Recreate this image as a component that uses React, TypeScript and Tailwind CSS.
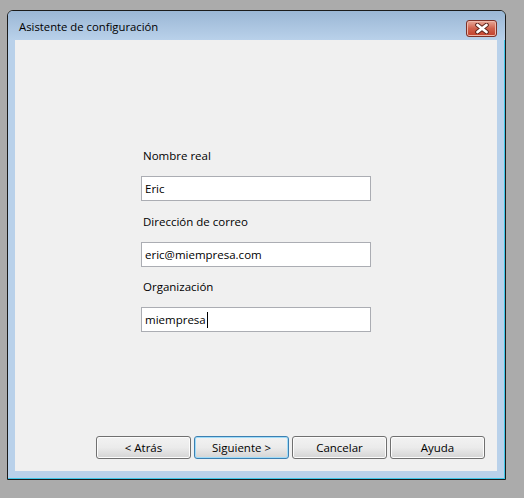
const font = "font-['Open_Sans','Noto_Sans',sans-serif]";

function Field({ label, value, caret, className }: { label: string; value: string; caret?: boolean; className?: string }) {
  return (
    <div className={`flex flex-col ${className ?? ""}`}>
      <div className="h-[16px] pl-[2px] text-[11.5px] leading-[16px] text-black">{label}</div>
      <div className="mt-[12px] flex h-[25px] w-[230px] items-center border border-[#abadb3] bg-white pl-[3px] text-[11.5px] text-black">
        <span>{value}</span>
        {caret && <span className="ml-px h-[16px] w-px bg-black" />}
      </div>
    </div>
  );
}

function WinButton({ children, focused }: { children: string; focused?: boolean }) {
  return (
    <button
      className={
        focused
          ? "h-[23px] w-[95px] rounded-[3px] border border-[#3c7fb1] bg-gradient-to-b from-[#f2f2f2] via-[#ebebeb] to-[#d4d4d4] text-[11.5px] text-black shadow-[inset_0_0_0_1px_#9fdcf9]"
          : "h-[23px] w-[95px] rounded-[3px] border border-[#707070] bg-gradient-to-b from-[#f2f2f2] via-[#ebebeb] to-[#d4d4d4] text-[11.5px] text-black shadow-[inset_0_0_0_1px_#fcfcfc]"
      }
    >
      {children}
    </button>
  );
}

export default function App() {
  return (
    <div className={`h-[498px] w-[524px] bg-[#ababab] pl-[7px] pt-[10px] ${font}`}>
      <div className="flex h-[470px] w-[499px] flex-col overflow-hidden rounded-t-[6px] border border-[#1b1b1b] bg-[#b9d1ea] shadow-[inset_-1px_-1px_0_#3ec6e8]">
        {/* title bar */}
        <div className="flex h-[29px] shrink-0 items-start justify-between bg-gradient-to-b from-[#9bb7d5] to-[#b9d1ea] pl-[11px] pr-[8px]">
          <span className="mt-[8px] text-[11.3px] leading-[16px] text-black">Asistente de configuración</span>
          <div className="mt-[9px] flex h-[17px] w-[31px] items-center justify-center rounded-[3px] border border-[#7d3127] bg-gradient-to-b from-[#e6a99a] via-[#d0614c] to-[#c23f2a] shadow-[inset_0_0_0_1px_#eeb8aa]">
            <svg width="14" height="11" viewBox="0 0 14 11">
              <path d="M2.5 2 L11.5 9 M11.5 2 L2.5 9" stroke="#5a2219" strokeWidth="4.6" strokeLinecap="round" />
              <path d="M2.5 2 L11.5 9 M11.5 2 L2.5 9" stroke="#ffffff" strokeWidth="2.8" strokeLinecap="round" />
            </svg>
          </div>
        </div>
        {/* client area */}
        <div className="ml-[7px] flex h-[431px] w-[482px] flex-col bg-[#f0f0f0]">
          <div className="ml-[126px] mt-[108px] flex flex-col">
            <Field label="Nombre real" value="Eric" />
            <Field label="Dirección de correo" value="eric@miempresa.com" className="mt-[13px]" />
            <Field label="Organización" value="miempresa" caret className="mt-[12px]" />
          </div>
          <div className="mb-[12px] ml-[81px] mt-auto flex gap-[3px]">
            <WinButton>&lt; Atrás</WinButton>
            <WinButton focused>Siguiente &gt;</WinButton>
            <WinButton>Cancelar</WinButton>
            <WinButton>Ayuda</WinButton>
          </div>
        </div>
      </div>
    </div>
  );
}
